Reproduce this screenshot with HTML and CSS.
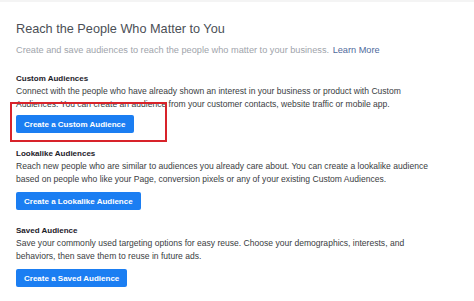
FILE: index.html
```html
<!DOCTYPE html>
<html lang="en">
<head>
  <meta charset="UTF-8" />
  <meta name="viewport" content="width=device-width, initial-scale=1.0"/>
  <title>Audiences</title>
  <link rel="stylesheet" href="styles.css">
</head>
<body>
  <div class="page">
    <h1>Reach the People Who Matter to You</h1>
    <p class="lead">Create and save audiences to reach the people who matter to your business. <a href="#">Learn More</a></p>

    <div class="section first">
      <h2>Custom Audiences</h2>
      <p>Connect with the people who have already shown an interest in your business or product with Custom<br>Audiences. You can create an audience from your customer contacts, website traffic or mobile app.</p>
      <div class="action">
        <button>Create a Custom Audience</button>
        <div class="highlight"></div>
      </div>
    </div>

    <div class="section">
      <h2>Lookalike Audiences</h2>
      <p>Reach new people who are similar to audiences you already care about. You can create a lookalike audience<br>based on people who like your Page, conversion pixels or any of your existing Custom Audiences.</p>
      <div class="action">
        <button>Create a Lookalike Audience</button>
      </div>
    </div>

    <div class="section">
      <h2>Saved Audience</h2>
      <p>Save your commonly used targeting options for easy reuse. Choose your demographics, interests, and<br>behaviors, then save them to reuse in future ads.</p>
      <div class="action">
        <button>Create a Saved Audience</button>
      </div>
    </div>
  </div>
</body>
</html>
```

FILE: styles.css
```css
body {
  margin: 0;
  background: #fff;
  font-family: "Liberation Sans", Arial, sans-serif;
  color: #4b4f56;
}

.page {
  border-top: 2px solid #f4f4f4;
  padding: 18px 16px 0;
}

h1 {
  margin: 0;
  font-size: 12.7px;
  font-weight: normal;
  line-height: 18px;
  color: #4b4f56;
}

.lead {
  margin: 6px 0 0;
  font-size: 9.2px;
  line-height: 12px;
  color: #a0a4ab;
}

.lead a {
  color: #4f6a9c;
  text-decoration: none;
  margin-left: 1px;
}

.section {
  margin-top: 15px;
}

.section.first {
  margin-top: 17px;
}

h2 {
  margin: 0;
  font-size: 8px;
  line-height: 12px;
  font-weight: bold;
  color: #1d2129;
}

.section p {
  margin: 0;
  font-size: 8.55px;
  line-height: 13px;
  color: #3a3d42;
}

.action {
  position: relative;
  display: flex;
  margin-top: 6px;
}

.first .action {
  margin-top: 4px;
}

button {
  border: none;
  border-radius: 2px;
  background: #1b7ef2;
  color: #fff;
  font-family: inherit;
  font-size: 8px;
  font-weight: bold;
  height: 18px;
  padding: 0 8px;
  cursor: pointer;
}

.highlight {
  position: absolute;
  left: -6px;
  top: -13px;
  width: 153px;
  height: 36px;
  border: 2px solid #d8232a;
}
```
